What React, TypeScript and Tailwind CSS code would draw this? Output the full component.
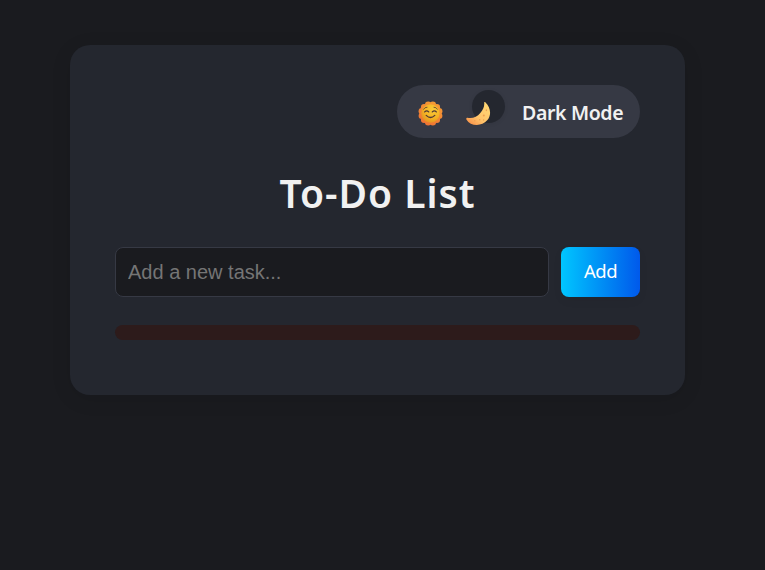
import React from "react";

function Sun() {
  const petals = Array.from({ length: 12 }, (_, i) => {
    const a = ((i + 0.5) * Math.PI) / 6;
    return <circle key={i} cx={12.5 + 9 * Math.cos(a)} cy={12.5 + 9 * Math.sin(a)} r="3.2" fill="url(#petal)" />;
  });
  return (
    <svg className="h-[25px] w-[25px] shrink-0" viewBox="0 0 25 25" fill="none">
      <defs>
        <linearGradient id="petal" gradientUnits="userSpaceOnUse" x1="18" y1="2" x2="7" y2="23">
          <stop stopColor="#f59a34" />
          <stop offset="1" stopColor="#ef7434" />
        </linearGradient>
        <radialGradient id="face" cx="0.62" cy="0.3" r="0.75">
          <stop stopColor="#f9ca38" />
          <stop offset="0.6" stopColor="#f4b324" />
          <stop offset="1" stopColor="#e39322" />
        </radialGradient>
      </defs>
      {petals}
      <circle cx="12.5" cy="12.5" r="9.2" fill="url(#face)" />
      <g stroke="#513a35" strokeLinecap="round" strokeWidth="1.3">
        <path strokeWidth="0.8" d="M5.6 8.2Q6.8 6 9 6.2M16 6.2Q18.2 6 19.4 8.2" />
        <path d="M6.7 10.9Q8.7 8.7 10.7 10.9M14.3 10.9Q16.3 8.7 18.3 10.9" />
        <path d="M8.2 14.4Q12.5 18.6 16.8 14.4" />
      </g>
    </svg>
  );
}

function Moon() {
  return (
    <svg className="relative block h-[25px] w-[25px]" viewBox="0 0 25 25" fill="none">
      <defs>
        <linearGradient id="moon" x1="0.85" y1="0.15" x2="0.2" y2="1">
          <stop stopColor="#ffd572" />
          <stop offset="0.6" stopColor="#ffc36a" />
          <stop offset="1" stopColor="#f8944b" />
        </linearGradient>
      </defs>
      <path
        d="M18.2 1.4C18.5.9 19.1 1 19.5 1.5C24.8 6.6 25.7 14.2 21.2 19.3C15.6 25.8 4.4 25.4.4 18.4C0 17.3.6 16.6 1.4 16.8C6.6 17.7 11 16.1 14.3 12C17.2 8.5 18.6 5.5 18.2 1.4Z"
        fill="url(#moon)"
      />
      <g fill="#ed9f51">
        <ellipse cx="20.4" cy="9.3" rx=".7" ry="1" />
        <circle cx="17.8" cy="14.5" r="1" />
        <circle cx="13.7" cy="18.7" r=".8" />
        <circle cx="8.8" cy="19.7" r=".7" />
        <circle cx="17.6" cy="19" r=".7" />
      </g>
    </svg>
  );
}

export default function App() {
  return (
    <main className="min-h-screen overflow-hidden bg-[#1a1b1f] pt-[45px] pl-[70px] font-['Noto_Sans','Open_Sans',sans-serif] text-[#f1f1f1]">
      <section className="h-[350px] w-[615px] rounded-[20px] bg-[#24272f] px-[45px] pt-10 shadow-[0_4px_20px_rgba(0,0,0,0.1)]">
        <div className="flex justify-end">
          <button className="flex h-[53px] w-[243px] items-center rounded-full bg-[#363944] pl-[21px]">
            <span className="mt-[3px] block">
              <Sun />
            </span>
            <span className="relative mt-1 ml-[23px] block">
              <span className="absolute -top-[11px] left-1.5 h-[33px] w-[33px] rounded-full bg-[#24272f] shadow-[0_1px_4px_rgba(0,0,0,0.08)]" />
              <Moon />
            </span>
            <span className="mt-0.5 ml-[31px] text-[19.5px] leading-none font-semibold tracking-[-0.36px] whitespace-nowrap">
              Dark Mode
            </span>
          </button>
        </div>
        <h1 className="mt-7 h-[53px] text-center text-[39px] leading-[53px] font-semibold tracking-[1px] whitespace-nowrap">
          To-Do List
        </h1>
        <form className="mt-7 flex gap-3" onSubmit={(e) => e.preventDefault()}>
          <input
            className="h-[50px] w-[434px] rounded-lg border border-[#363944] bg-[#1a1b1f] px-3 font-['Liberation_Sans',sans-serif] text-[20px] outline-none placeholder:text-[#757575]"
            placeholder="Add a new task..."
          />
          <button className="h-[50px] w-[79px] rounded-lg bg-[linear-gradient(90deg,#00c6ff,#0059eb)] pb-0.5 text-[18.5px] font-normal tracking-[-0.5px] text-white shadow-[0_4px_10px_rgba(0,0,0,0.05)]">
            Add
          </button>
        </form>
        <div className="mt-7 h-[15px] rounded-lg bg-[#2d1b1b]" />
      </section>
    </main>
  );
}
